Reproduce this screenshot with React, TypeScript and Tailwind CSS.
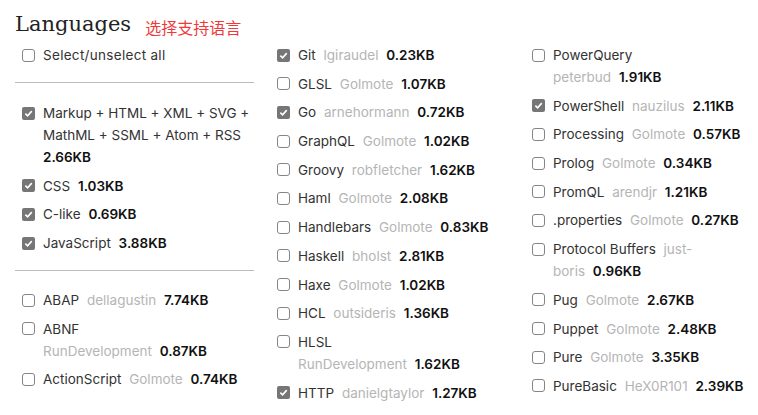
import React from "react";

type Item = { name: string; author?: string; size: string; checked?: boolean; br?: boolean; authorBr?: [string, string] };

const col1a: Item[] = [
  { name: "Markup + HTML + XML + SVG + MathML + SSML + Atom + RSS", size: "2.66KB", checked: true },
  { name: "CSS", size: "1.03KB", checked: true },
  { name: "C-like", size: "0.69KB", checked: true },
  { name: "JavaScript", size: "3.88KB", checked: true },
];
const col1b: Item[] = [
  { name: "ABAP", author: "dellagustin", size: "7.74KB" },
  { name: "ABNF", author: "RunDevelopment", size: "0.87KB", br: true },
  { name: "ActionScript", author: "Golmote", size: "0.74KB" },
];
const col2: Item[] = [
  { name: "Git", author: "lgiraudel", size: "0.23KB", checked: true },
  { name: "GLSL", author: "Golmote", size: "1.07KB" },
  { name: "Go", author: "arnehormann", size: "0.72KB", checked: true },
  { name: "GraphQL", author: "Golmote", size: "1.02KB" },
  { name: "Groovy", author: "robfletcher", size: "1.62KB" },
  { name: "Haml", author: "Golmote", size: "2.08KB" },
  { name: "Handlebars", author: "Golmote", size: "0.83KB" },
  { name: "Haskell", author: "bholst", size: "2.81KB" },
  { name: "Haxe", author: "Golmote", size: "1.02KB" },
  { name: "HCL", author: "outsideris", size: "1.36KB" },
  { name: "HLSL", author: "RunDevelopment", size: "1.62KB", br: true },
  { name: "HTTP", author: "danielgtaylor", size: "1.27KB", checked: true },
];
const col3: Item[] = [
  { name: "PowerQuery", author: "peterbud", size: "1.91KB", br: true },
  { name: "PowerShell", author: "nauzilus", size: "2.11KB", checked: true },
  { name: "Processing", author: "Golmote", size: "0.57KB" },
  { name: "Prolog", author: "Golmote", size: "0.34KB" },
  { name: "PromQL", author: "arendjr", size: "1.21KB" },
  { name: ".properties", author: "Golmote", size: "0.27KB" },
  { name: "Protocol Buffers", size: "0.96KB", authorBr: ["just-", "boris"] },
  { name: "Pug", author: "Golmote", size: "2.67KB" },
  { name: "Puppet", author: "Golmote", size: "2.48KB" },
  { name: "Pure", author: "Golmote", size: "3.35KB" },
  { name: "PureBasic", author: "HeX0R101", size: "2.39KB" },
];

function Box({ checked }: { checked?: boolean }) {
  return checked ? (
    <span className="mt-[4.5px] flex h-[13px] w-[13px] shrink-0 items-center justify-center rounded-[2px] bg-[#767676]">
      <svg width="9" height="9" viewBox="0 0 10 10">
        <path d="M1.5 5.2 L4 7.6 L8.6 2.4" fill="none" stroke="white" strokeWidth="1.8" />
      </svg>
    </span>
  ) : (
    <span className="mt-[4.5px] h-[13px] w-[13px] shrink-0 rounded-[3px] border border-[#858585] bg-white" />
  );
}

function Row({ item }: { item: Item }) {
  return (
    <div className="mb-[6.7px] flex gap-[8px] pl-[7px]">
      <Box checked={item.checked} />
      <div className="w-[207px] leading-[22px]">
        <span className="mr-[4px] text-[#333]">{item.name}</span>
        {item.br ? <br /> : " "}
        {item.author && <span className="mr-[4px] text-[#b5b5b5]">{item.author}</span>}
        {item.authorBr && (
          <span className="mr-[4px] text-[#b5b5b5]">
            {item.authorBr[0]}
            <br />
            {item.authorBr[1]}
          </span>
        )}{" "}
        <span className="whitespace-nowrap font-semibold text-[#111]">{item.size}</span>
      </div>
    </div>
  );
}

export default function App() {
  return (
    <div className="h-[415px] w-[758px] overflow-hidden bg-white pl-[15px] pt-[5px] font-['Inter',sans-serif] text-[13.5px]">
      <div className="flex h-[39px] items-center">
        <span className="font-['DejaVu_Serif',serif] text-[21px] text-[#222]">Languages</span>
        <span className="ml-[14px] mt-[5px] font-['Noto_Sans_CJK_SC',sans-serif] text-[16px] text-[#f03a3a]">选择支持语言</span>
      </div>
      <div className="grid grid-cols-[239px_239px_239px] gap-x-[16px]">
        <div>
          <div className="mb-[6.7px] flex gap-[8px] pl-[7px]">
            <Box />
            <div className="leading-[22px] tracking-[0.3px] text-[#333]">Select/unselect all</div>
          </div>
          <hr className="mb-[19px] mt-[16px] border-[#bbb]" />
          {col1a.map((i) => <Row key={i.name} item={i} />)}
          <hr className="mb-[18px] mt-[16px] border-[#bbb]" />
          {col1b.map((i) => <Row key={i.name} item={i} />)}
        </div>
        <div>{col2.map((i) => <Row key={i.name} item={i} />)}</div>
        <div>{col3.map((i) => <Row key={i.name} item={i} />)}</div>
      </div>
    </div>
  );
}
